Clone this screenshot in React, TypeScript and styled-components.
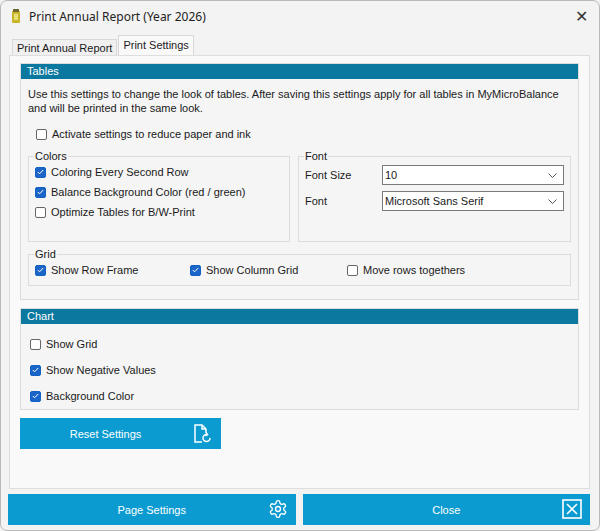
import React from "react";
import styled, { createGlobalStyle } from "styled-components";

const Global = createGlobalStyle`
  html, body { margin: 0; padding: 0; background: #f3f3f3; }
  body { font-family: "Liberation Sans", Arial, sans-serif; font-size: 11px; color: #1a1a1a; }
`;

const Win = styled.div`
  width: 600px; height: 531px; box-sizing: border-box;
  border: 1px solid #b9b9b9; border-radius: 7px; background: #f3f3f3;
  display: flex; flex-direction: column; overflow: hidden;
`;
const TitleBar = styled.div`
  height: 30px; display: flex; align-items: center; padding: 0 8px 0 8px;
  font-family: "Noto Sans", "Liberation Sans", sans-serif; font-size: 12px; color: #222;
`;
const TitleText = styled.span` flex: 1; margin-left: 6px; `;
const CloseX = styled.span` font-size: 16px; color: #333; width: 16px; text-align: center; margin-right: 2px; `;
const Tabs = styled.div` display: flex; align-items: flex-end; padding: 6px 0 0 11px; height: 18px; `;
const Tab = styled.div<{ $active?: boolean }>`
  padding: 0 4px; height: ${p => (p.$active ? 20 : 16)}px; line-height: ${p => (p.$active ? 18 : 16)}px;
  border: 1px solid #d8d8d8; border-bottom: none; background: ${p => (p.$active ? "#f9f9f9" : "#f0f0f0")};
  font-size: 11px; box-sizing: border-box; ${p => p.$active ? "margin-left:1px;" : ""}
`;
const Page = styled.div`
  margin: 0 9px 0 8px; height: 434px; background: #f9f9f9; border: 1px solid #dedede;
  box-sizing: border-box; padding: 7px 10px 0 10px; display: flex; flex-direction: column; gap: 8px;
`;
const Box = styled.div<{ $h: number }>`
  border: 1px solid #dcdcdc; height: ${p => p.$h}px; box-sizing: border-box; background: #f5f5f5;
`;
const Header = styled.div`
  background: #0b789f; color: #fff; height: 15px; line-height: 15px; padding-left: 6px; font-size: 11px;
`;
const Desc = styled.div` padding: 8px 7px 0 7px; line-height: 14px; `;
const Row = styled.label<{ $pad?: string }>` display: flex; align-items: center; gap: 5px; padding: ${p => p.$pad || "0"}; height: 20px; `;
const Cb = styled.span<{ $on?: boolean }>`
  width: 11px; height: 11px; border-radius: 2px; box-sizing: border-box; flex: none;
  border: 1px solid ${p => (p.$on ? "#1262c4" : "#666")}; background: ${p => (p.$on ? "#1b65c9" : "#fff")};
  display: flex; align-items: center; justify-content: center;
`;
const Groups = styled.div` display: flex; gap: 8px; padding: 6px 7px 0 7px; `;
const Group = styled.fieldset<{ $w?: number; $h: number }>`
  margin: 0; padding: 0 6px 0 6px; border: 1px solid #dcdcdc; ${p => p.$w ? `width:${p.$w}px;` : "flex:1;"}
  height: ${p => p.$h}px; box-sizing: border-box; border-radius: 0;
  legend { padding: 0 1px; font-size: 11px; margin-left: -1px; }
`;
const FontRow = styled.div` display: flex; align-items: center; height: 26px; `;
const FontLabel = styled.span` width: 77px; `;
const Select = styled.div`
  width: 182px; height: 20px; box-sizing: border-box; border: 1px solid #7a7a7a; background: #fff;
  display: flex; align-items: center; justify-content: space-between; padding: 0 6px 0 2px;
`;
const GridRow = styled.div` display: flex; `;
const Btn = styled.div<{ $w?: number }>`
  background: #0b9bd0; color: #fff; height: 31px; display: flex; align-items: center; position: relative;
  ${p => p.$w ? `width:${p.$w}px;` : "flex:1;"} justify-content: center; font-size: 11px;
`;
const BtnIcon = styled.span` position: absolute; right: 8px; top: 5px; display: flex; `;
const Footer = styled.div` display: flex; gap: 7px; padding: 5px 9px 0 7px; `;

const Check = ({ on }: { on?: boolean }) => (
  <Cb $on={on}>{on && <svg width="7" height="6" viewBox="0 0 7 6"><path d="M0.8 3 L2.6 4.8 L6.2 1" stroke="#fff" strokeWidth="1" fill="none" /></svg>}</Cb>
);
const Chev = () => <svg width="9" height="5" viewBox="0 0 9 5"><path d="M0.5 0.5 L4.5 4.5 L8.5 0.5" stroke="#555" fill="none" /></svg>;

export default function App() {
  return (
    <>
      <Global />
      <Win>
        <TitleBar>
          <svg width="14" height="16" viewBox="0 0 14 16"><rect x="3" y="3" width="8" height="12" rx="1" fill="#c9b42a" /><rect x="4" y="1" width="6" height="3" fill="#6a6a30" /><rect x="5" y="6" width="4" height="6" fill="#e8df7a" /></svg>
          <TitleText>Print Annual Report (Year 2026)</TitleText>
          <CloseX>✕</CloseX>
        </TitleBar>
        <Tabs>
          <Tab>Print Annual Report</Tab>
          <Tab $active>Print Settings</Tab>
        </Tabs>
        <Page>
          <Box $h={237}>
            <Header>Tables</Header>
            <Desc>Use this settings to change the look of tables. After saving this settings apply for all tables in MyMicroBalance and will be printed in the same look.</Desc>
            <Row $pad="9px 0 0 15px"><Check /> Activate settings to reduce paper and ink</Row>
            <Groups>
              <Group $w={264} $h={92}>
                <legend>Colors</legend>
                <Row><Check on />Coloring Every Second Row</Row>
                <Row><Check on />Balance Background Color (red / green)</Row>
                <Row><Check />Optimize Tables for B/W-Print</Row>
              </Group>
              <Group $h={92}>
                <legend>Font</legend>
                <FontRow><FontLabel>Font Size</FontLabel><Select><span>10</span><Chev /></Select></FontRow>
                <FontRow><FontLabel>Font</FontLabel><Select><span>Microsoft Sans Serif</span><Chev /></Select></FontRow>
              </Group>
            </Groups>
            <Groups>
              <Group $h={38}>
                <legend>Grid</legend>
                <GridRow>
                  <Row style={{ width: 155 }}><Check on />Show Row Frame</Row>
                  <Row style={{ width: 157 }}><Check on />Show Column Grid</Row>
                  <Row><Check />Move rows togethers</Row>
                </GridRow>
              </Group>
            </Groups>
          </Box>
          <Box $h={102}>
            <Header>Chart</Header>
            <Row $pad="10px 0 6px 9px"><Check />Show Grid</Row>
            <Row $pad="0 0 6px 9px"><Check on />Show Negative Values</Row>
            <Row $pad="0 0 0 9px"><Check on />Background Color</Row>
          </Box>
          <Btn $w={201}>
            <span style={{ marginRight: 30 }}>Reset Settings</span>
            <BtnIcon>
              <svg width="20" height="22" viewBox="0 0 20 22" fill="none" stroke="#fff" strokeWidth="1.5"><path d="M9 19 H2 V2 H9 L13 6 V10" /><path d="M9 2 V6 H13" /><path d="M17 15 A3.5 3.5 0 1 1 13.5 11.5" /><path d="M13 9.5 L14.5 11.5 L12.5 13" /></svg>
            </BtnIcon>
          </Btn>
        </Page>
        <Footer>
          <Btn>Page Settings<BtnIcon><svg width="20" height="20" viewBox="0 0 24 24" fill="none" stroke="#fff" strokeWidth="1.6"><path d="M12.22 2h-.44a2 2 0 0 0-2 2v.18a2 2 0 0 1-1 1.73l-.43.25a2 2 0 0 1-2 0l-.15-.08a2 2 0 0 0-2.73.73l-.22.38a2 2 0 0 0 .73 2.73l.15.1a2 2 0 0 1 1 1.72v.51a2 2 0 0 1-1 1.74l-.15.09a2 2 0 0 0-.73 2.73l.22.38a2 2 0 0 0 2.73.73l.15-.08a2 2 0 0 1 2 0l.43.25a2 2 0 0 1 1 1.73V20a2 2 0 0 0 2 2h.44a2 2 0 0 0 2-2v-.18a2 2 0 0 1 1-1.73l.43-.25a2 2 0 0 1 2 0l.15.08a2 2 0 0 0 2.73-.73l.22-.39a2 2 0 0 0-.73-2.73l-.15-.08a2 2 0 0 1-1-1.74v-.5a2 2 0 0 1 1-1.74l.15-.09a2 2 0 0 0 .73-2.73l-.22-.38a2 2 0 0 0-2.73-.73l-.15.08a2 2 0 0 1-2 0l-.43-.25a2 2 0 0 1-1-1.73V4a2 2 0 0 0-2-2z" /><circle cx="12" cy="12" r="3" /></svg></BtnIcon></Btn>
          <Btn>Close<BtnIcon><svg width="20" height="20" viewBox="0 0 20 20" fill="none" stroke="#fff" strokeWidth="1.6"><rect x="1" y="1" width="18" height="18" /><path d="M5 5 L15 15 M15 5 L5 15" /></svg></BtnIcon></Btn>
        </Footer>
      </Win>
    </>
  );
}
